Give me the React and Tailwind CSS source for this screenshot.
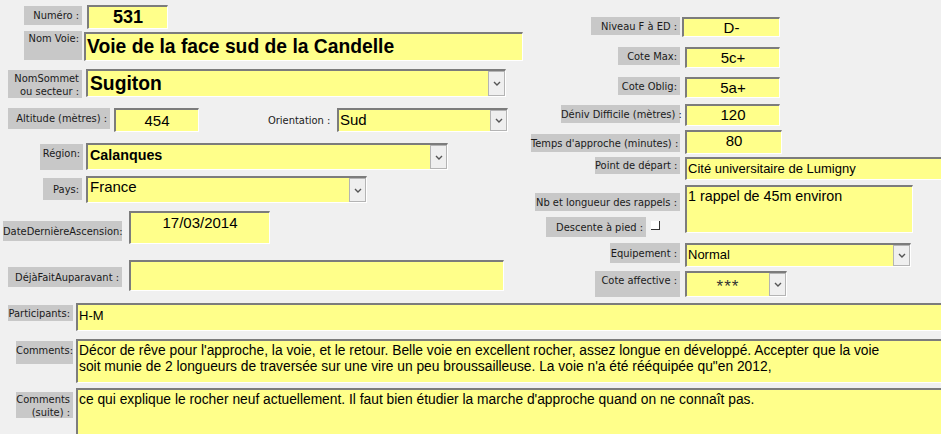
const labelFont = { fontFamily: "'DejaVu Sans Condensed', 'Liberation Sans', sans-serif" };

function Label({ className = "", children, plain }) {
  return (
    <div
      style={labelFont}
      className={`shrink-0 text-right text-[11px] leading-[13px] whitespace-nowrap text-[#1a1a1a] pr-[3px] ${plain ? "" : "bg-[#c8c8c8]"} ${className}`}
    >
      {children}
    </div>
  );
}

function Box({ className = "", children }) {
  return (
    <div className={`shrink-0 overflow-hidden bg-[#ffff8a] border-t-2 border-l-2 border-b border-r border-t-[#7c7c7c] border-l-[#7c7c7c] border-b-white border-r-white text-black ${className}`}>
      {children}
    </div>
  );
}

function Chevron() {
  return (
    <svg width="8" height="5" viewBox="0 0 8 5">
      <path d="M1 1 L4 4 L7 1" fill="none" stroke="#555" strokeWidth="1.4" />
    </svg>
  );
}

function Combo({ className = "", textClass = "", children }) {
  return (
    <Box className={`flex ${className}`}>
      <div className={`flex-1 min-w-0 whitespace-nowrap ${textClass}`}>{children}</div>
      <div className="w-[17px] shrink-0 bg-[#efefef] border border-[#b4b4b4] flex items-center justify-center">
        <Chevron />
      </div>
    </Box>
  );
}

export default function App() {
  return (
    <div
      className="w-[941px] h-[434px] overflow-hidden bg-[#f0f0f0]"
      style={{ fontFamily: "'Liberation Sans', Arial, sans-serif" }}
    >
      <div className="flex h-[297px]">
        {/* left column */}
        <div className="w-[530px] shrink-0 flex flex-col">
          <div className="flex items-start pt-[5px]">
            <Label className="ml-[24px] w-[58px] h-[19px] mt-[1px] pt-[3px]">Numéro :</Label>
            <Box className="ml-[5px] w-[81px] h-[24px] text-center text-[18px] font-bold leading-[21px]">531</Box>
          </div>
          <div className="flex items-start mt-[2px]">
            <Label className="ml-[24px] w-[58px] h-[29px] pt-[1px]">Nom Voie:</Label>
            <Box className="ml-[2px] mt-[1px] w-[439px] h-[29px] pl-[1px] text-[19.3px] font-bold leading-[26px] whitespace-nowrap">
              Voie de la face sud de la Candelle
            </Box>
          </div>
          <div className="flex items-start mt-[8px]">
            <Label className="ml-[8px] w-[74px] h-[28px] mt-[1px] pt-[2px] leading-[12px]">
              NomSommet
              <br />
              ou secteur :
            </Label>
            <Combo className="ml-[4px] w-[420px] h-[28px]" textClass="pl-[2px] text-[19.3px] font-bold leading-[25px]">
              Sugiton
            </Combo>
          </div>
          <div className="flex items-start mt-[10px]">
            <Label className="ml-[8px] w-[102px] h-[21px] pt-[4px]">Altitude (mètres) :</Label>
            <Box className="ml-[4px] w-[85px] h-[24px] text-center text-[15px] leading-[21px]">454</Box>
            <Label plain className="ml-[69px] w-[64px] h-[21px] pt-[6px] pr-0">Orientation :</Label>
            <Combo className="ml-[5px] w-[171px] h-[24px]" textClass="pl-[1px] text-[15px] leading-[19px]">
              Sud
            </Combo>
          </div>
          <div className="flex items-start mt-[11px]">
            <Label className="ml-[40px] w-[43px] h-[26px] mt-[1px] pt-[3px]">Région:</Label>
            <Combo className="ml-[3px] w-[362px] h-[27px]" textClass="pl-[2px] text-[14.3px] font-bold leading-[21px]">
              Calanques
            </Combo>
          </div>
          <div className="flex items-start mt-[6px]">
            <Label className="ml-[43px] w-[39px] h-[22px] mt-[2px] pt-[5px]">Pays:</Label>
            <Combo className="ml-[4px] w-[281px] h-[27px]" textClass="pl-[2px] text-[15px] leading-[18px]">
              France
            </Combo>
          </div>
          <div className="flex items-start mt-[8px]">
            <Label className="ml-[3px] w-[119px] h-[20px] mt-[10px] pt-[4px] pr-[1px]">DateDernièreAscension:</Label>
            <Box className="ml-[7px] w-[141px] h-[33px] text-center text-[15px] leading-[20px]">17/03/2014</Box>
          </div>
          <div className="flex items-start mt-[16px]">
            <Label className="ml-[8px] w-[114px] h-[20px] mt-[7px] pt-[4px]">DéjàFaitAuparavant :</Label>
            <Box className="ml-[7px] w-[375px] h-[31px]" />
          </div>
        </div>

        {/* right column */}
        <div className="flex-1 flex flex-col">
          <div className="flex items-start pt-[17px]">
            <Label className="ml-[61px] w-[89px] h-[18px] pt-[3px]">Niveau F à ED :</Label>
            <Box className="ml-[2px] w-[98px] h-[20px] text-center text-[15px] leading-[17px]">D-</Box>
          </div>
          <div className="flex items-start mt-[10px]">
            <Label className="ml-[88px] w-[62px] h-[18px] pt-[3px]">Cote Max:</Label>
            <Box className="ml-[5px] w-[95px] h-[21px] text-center text-[15px] leading-[18px]">5c+</Box>
          </div>
          <div className="flex items-start mt-[9px]">
            <Label className="ml-[88px] w-[62px] h-[18px] pt-[3px]">Cote Oblig:</Label>
            <Box className="ml-[5px] w-[95px] h-[21px] text-center text-[15px] leading-[18px]">5a+</Box>
          </div>
          <div className="flex items-start mt-[6px]">
            <Label className="ml-[31px] w-[119px] h-[18px] mt-[1px] pt-[3px]">Déniv Difficile (mètres) :</Label>
            <Box className="ml-[5px] w-[95px] h-[22px] text-center text-[15px] leading-[18px]">120</Box>
          </div>
          <div className="flex items-start mt-[4px]">
            <Label className="ml-[1px] w-[149px] h-[18px] mt-[4px] pt-[3px]">Temps d'approche (minutes) :</Label>
            <Box className="ml-[5px] w-[97px] h-[24px] text-center text-[15px] leading-[18px]">80</Box>
          </div>
          <div className="flex items-start mt-[3px]">
            <Label className="ml-[65px] w-[85px] h-[17px] pt-[2px]">Point de départ :</Label>
            <Box className="ml-[5px] w-[262px] h-[23px] pl-[1px] text-[13px] leading-[19px] whitespace-nowrap">
              Cité universitaire de Lumigny
            </Box>
          </div>
          <div className="flex items-start mt-[5px]">
            <div className="w-[150px] shrink-0 flex flex-col">
              <Label className="ml-[5px] w-[145px] h-[18px] mt-[8px] pt-[3px]">Nb et longueur des rappels :</Label>
              <div className="flex items-start mt-[6px]">
                <Label className="ml-[16px] w-[100px] h-[20px] pt-[4px]">Descente à pied :</Label>
                <div className="ml-[5px] mt-[4px] w-[9px] h-[9px] bg-white border-b border-r border-[#333]" />
              </div>
            </div>
            <Box className="ml-[5px] w-[228px] h-[48px] pl-[1px] text-[14.3px] leading-[18px] whitespace-nowrap">
              1 rappel de 45m environ
            </Box>
          </div>
          <div className="flex items-start mt-[6px]">
            <Label className="ml-[80px] w-[70px] h-[20px] pt-[4px]">Equipement :</Label>
            <Combo className="ml-[5px] w-[226px] h-[24px]" textClass="pl-[1px] text-[13px] leading-[20px]">
              Normal
            </Combo>
          </div>
          <div className="flex items-start mt-[4px]">
            <Label className="ml-[65px] w-[85px] h-[26px] pt-[3px]">Cote affective :</Label>
            <Combo className="ml-[5px] w-[102px] h-[26px]" textClass="text-center text-[17px] leading-[18px] pt-[5px] tracking-[1px] text-[#333]">
              ***
            </Combo>
          </div>
        </div>
      </div>

      {/* bottom rows */}
      <div className="flex items-start mt-[6px]">
        <Label className="ml-[8px] w-[65px] h-[16px] mt-[2px] pt-[2px] pr-[2px]">Participants:</Label>
        <Box className="ml-[3px] w-[880px] h-[28px] pl-[1px] text-[13px] leading-[22px]">H-M</Box>
      </div>
      <div className="flex items-start mt-[8px]">
        <Label className="ml-[16px] w-[57px] h-[23px] mt-[2px] pt-[3px] pr-[2px]">Comments:</Label>
        <Box className="ml-[3px] w-[880px] h-[44px] pl-[1px] pt-[2px] text-[13.8px] leading-[16px] whitespace-nowrap">
          Décor de rêve pour l'approche, la voie, et le retour. Belle voie en excellent rocher, assez longue en développé. Accepter que la voie
          <br />
          soit munie de 2 longueurs de traversée sur une vire un peu broussailleuse. La voie n'a été rééquipée qu"en 2012,
        </Box>
      </div>
      <div className="flex items-start mt-[5px]">
        <Label className="ml-[16px] w-[57px] h-[26px] mt-[4px] pt-[1px] pr-[2px] leading-[12px]">
          Comments
          <br />
          (suite) :
        </Label>
        <Box className="ml-[3px] w-[880px] h-[50px] pl-[1px] pt-[2px] text-[13.8px] leading-[16px] whitespace-nowrap">
          ce qui explique le rocher neuf actuellement. Il faut bien étudier la marche d'approche quand on ne connaît pas.
        </Box>
      </div>
    </div>
  );
}
